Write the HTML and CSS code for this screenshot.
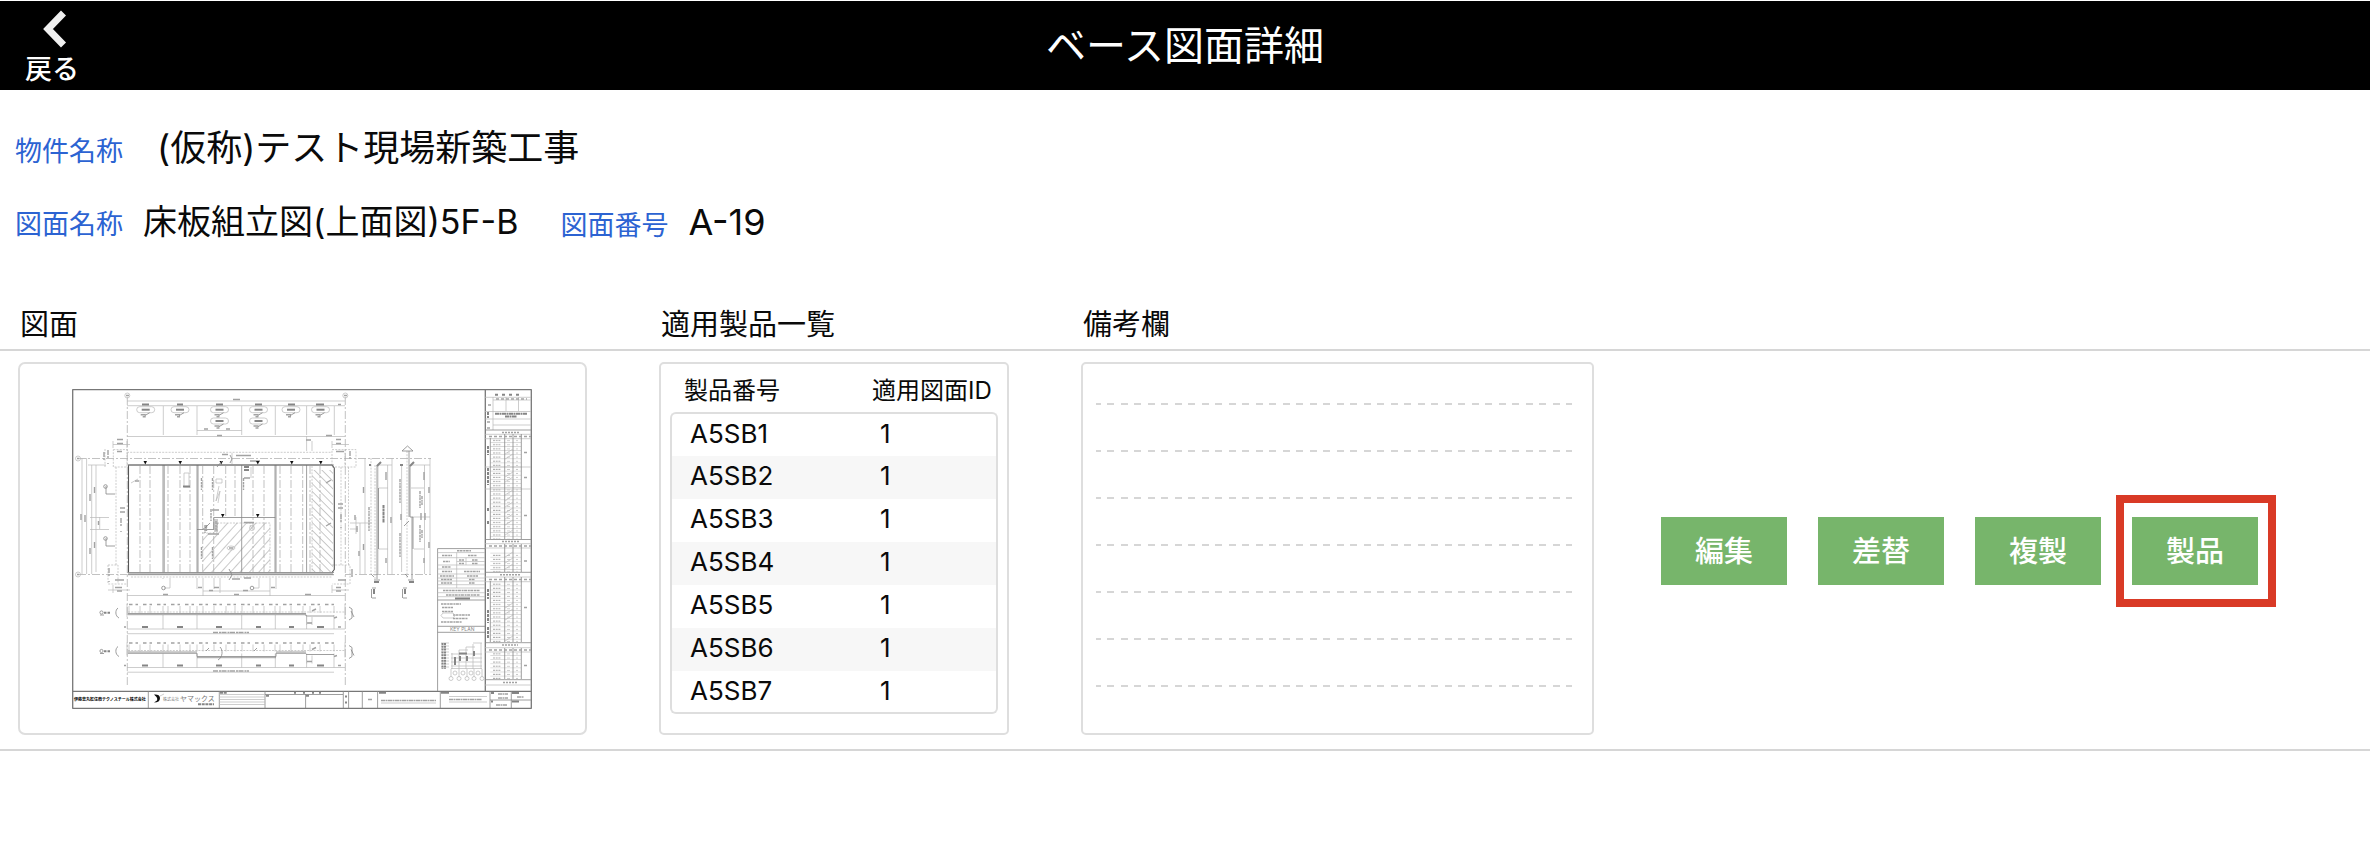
FILE: index.html
```html
<!DOCTYPE html>
<html lang="ja">
<head>
<meta charset="utf-8">
<meta name="viewport" content="width=device-width, initial-scale=1">
<title>ベース図面詳細</title>
<link rel="stylesheet" href="styles.css">
</head>
<body>
<header class="topbar">
  <button class="back" type="button">
    <svg class="back-icon" viewBox="0 0 24 38" aria-hidden="true"><path d="M20.500 3 L5 19 L20.500 35" /></svg>
    <span>戻る</span>
  </button>
  <h1 class="title">ベース図面詳細</h1>
</header>

<main>
  <dl class="info">
    <div class="info-row">
      <div class="pair pair-wide"><dt>物件名称</dt><dd>(仮称)テスト現場新築工事</dd></div>
    </div>
    <div class="info-row">
      <div class="pair"><dt>図面名称</dt><dd class="name">床板組立図(上面図)5F-B</dd></div>
      <div class="pair"><dt>図面番号</dt><dd>A-19</dd></div>
    </div>
  </dl>

  <div class="columns headings">
    <h2>図面</h2>
    <h2>適用製品一覧</h2>
    <h2><label for="notes">備考欄</label></h2>
  </div>

  <section class="columns record">
    <div class="cell">
      <div class="card drawing-card">
        <svg class="drawing" viewBox="62 377 481 341" role="img" aria-label="床板組立図">
          <defs>
            <pattern id="hatchA" width="7" height="7" patternUnits="userSpaceOnUse" patternTransform="rotate(42)"><path d="M0 0V7" stroke="#888" stroke-width=".9"/></pattern>
            <pattern id="hatchB" width="5.500" height="5.500" patternUnits="userSpaceOnUse" patternTransform="rotate(-45)"><path d="M0 0V6" stroke="#888" stroke-width=".9"/></pattern>
            <pattern id="rows" x="485" y="437.700" width="36" height="4.100" patternUnits="userSpaceOnUse"><path d="M5.300 4H36" stroke="#8c8c8c" stroke-width=".5"/><path d="M8 2H16" stroke="#aaa" stroke-width="1" stroke-dasharray="2 .7"/><path d="M22 2H25M31 2H33" stroke="#bbb" stroke-width=".8"/></pattern>
            <g id="tag"><rect x="-9" y="-3" width="18" height="6" rx="3" class="l"/><path d="M-4 0H4" class="mark"/><path d="M-5 5H0M-3 7H0" class="mark s"/><path d="M-1 6L4 3" class="d"/></g>
            <g id="section">
              <path class="l" d="M127 603V616M345 603V618M127 628H345M127 632.700H334"/>
              <path class="mark s" stroke-dasharray="3.500 3 2.500 5" d="M129 603.500H334"/>
              <path class="l dash" d="M128 611H345"/>
              <path class="l" d="M129 605V612M140 605V612M150 605V612M163 605V612M168 605V612M180 605V612M190 605V612M197 605V612M203 605V612M214 605V612M226 605V612M235 605V612M242 605V612M253 605V612M264 605V612M275 605V612M280 605V612M291 605V612M303 605V612M310 605V612M320 605V612M334 605V612"/>
              <path class="l" d="M163 614V628M197 614V628M241.700 614V628M275.300 614V628M306.600 614V628M334 614V628"/>
              <path class="mark" d="M142 626H148M177 626H183M216 626H222M256 626H261M289 626H294M317 626H324"/>
              <path class="mark s" d="M213 631.500H249" stroke-dasharray="5 1 2 .5"/>
              <circle class="d" cx="101.500" cy="611.500" r="1.600"/>
              <path class="mark" d="M104 611.800H110" stroke-dasharray="2.500 1"/>
              <path class="d" d="M118 607C115 609 115 615 119 617M349 606L352 608V617L349 619M100 614H104M351 610L354 616"/>
              <path class="l" d="M308 622H312M306.600 616V624M312 616V624"/>
              <path class="mark s" d="M307 622H312M334 617L337 616M312 610L316 608M338 626H341M124 626H126"/>
            </g>
          </defs>

          <!-- sheet frame -->
          <path class="frame" d="M72.700 388.700H531.300V707.300H72.700ZM72.700 690.300H531.300M485.300 388.700V690.300"/>

          <!-- grid lines and upper dimensions -->
          <path class="l axis" d="M127.300 396V684M345.300 396V684M78 457.500H431M78 573.500H127M345 573.500H431"/>
          <g class="l"><circle cx="127.300" cy="394.500" r="2.500"/><circle cx="345.300" cy="394.500" r="2.500"/><circle cx="78" cy="457.500" r="2.500"/><circle cx="78" cy="573.500" r="2.500"/></g>
          <path class="mark s" d="M126 394.500H129M344 394.500H347M77 457.500H79M77 573.500H79"/>
          <path class="l" d="M127 400H345M127 404.700H345M163.300 405V434M197 405V434M241.700 405V434M275.300 405V434M306.600 405V434M334.300 405V434M127 435.500H345M197 429.500H241.700"/>
          <path class="mark" d="M142 403.500H149M177 403.500H183M216 403.500H223M255 403.500H262M288 403.500H295M316 403.500H324"/>
          <path class="mark s" d="M233 398.500H240M217 434.500H222M326 434.500H332M204 428H208M226 428H230M338 403.500H341"/>
          <use href="#tag" x="145.700" y="408.700"/><use href="#tag" x="180" y="408.700"/><use href="#tag" x="219.500" y="408.700"/><use href="#tag" x="258.500" y="408.700"/><use href="#tag" x="291" y="408.700"/><use href="#tag" x="320.500" y="408.700"/><use href="#tag" x="219.500" y="420"/><use href="#tag" x="258.500" y="420"/>

          <!-- column corners -->
          <path class="l dash" d="M113.300 448.600H127V466H113.300ZM332 448.600H345V466H332ZM108 564V583H127M108 564H118V583M332 564H350V583H332M116 466V564M127 451.300H332M131 576H332M345 448.600H356V466H345M341 466V564M348.500 466V564M105 448V466"/>
          <path class="l" d="M113 440V447M127 440V447M113 443.500H130M332 440V447M332 443.500H349M306.600 435V450M312 440V450M108 589H130M332 589H349M113 584V592M332 584V592"/>
          <path class="mark s" d="M117 438.500H123M117 442.500H123M336 438.500H341M336 442.500H341M306 439H311M117 450.500H122M336 450.500H344M115 579H124M338 579H346M115 586.500H122M336 586.500H341M117 590H122M336 590H341M120 507H125M120 511H125M338 503H343M338 507H343M222 453.500H228M236 454.500H251M250 460H260M232 578H240M244 577H251"/>
          <path class="mark s" stroke-dasharray="5 1 2" d="M121 517V531M341 513V528M104 451V463M108 449V463M350 450V463M352 568V581M109 567V581"/>

          <!-- slab panels -->
          <path fill="url(#hatchB)" d="M312 469H333V571H312Z"/>
          <path fill="url(#hatchA)" d="M217 522H270V571H203V532H217Z"/>
          <path class="l dash" d="M217 522H270V571M203 532H217V522M312 465V571"/>
          <path class="l axis" d="M140 465V571M150 465V571M168 465V571M180 465V571M190 465V571M202.700 465V571M213.700 465V571M225.700 465V516M235 465V516M253 465V571M264 465V571M280 465V571M291 465V571M302.700 465V571M310 465V571M320 465V571"/>
          <path class="d" d="M163 464V571.500M164.200 464V571.500M197 464V571.500M198 464V571.500M241.700 464V571.500M275 464V571.500M276 464V571.500M306.600 464V571.500M275.300 516.500H213.700V528.500H197M215 518V531M217 518V531"/>
          <path class="thick" d="M128.500 571.500V464H332L334.300 467V568.500L332 571.500"/>
          <path class="d" d="M128 464H334M127.500 571.500H334M127.500 573.700H334"/>
          <path fill="#888" opacity=".55" d="M128 571.500H333V574H128Z"/>
          <path fill="#111" d="M143.500 460H147L145.300 463.500ZM178.500 460H182L180.200 463.500ZM219.500 460H223L221.200 463.500ZM256 460H259.500L257.800 463.500ZM290 460H293.500L291.800 463.500ZM319 460H322.500L320.800 463.500ZM221 513H224.500L222.700 516.500ZM256 513H259.500L257.700 516.500Z"/>
          <path class="l" d="M184 472H189V486H184ZM216 478H222V482H216ZM219 485L216 500L220 490L218 502M251 466V477M232 452V463M131 482L138 478M250 524L252 528M246 522H253"/>
          <circle class="l" cx="252" cy="527" r="2.500"/><ellipse class="l" cx="231" cy="547" rx="4" ry="2"/><path class="mark s" d="M229 547H233M135 480H139M326 482L331 479M326 525L331 522M244 521.500H254M212 509H219M244 477H250M208 533H219M203 528H207"/>
          <path class="mark" d="M183 485.500H190M244 466H249M244 469H249"/>
          <path class="mark s" stroke-dasharray="3 1 2 .5" d="M201.500 477V489M212.500 477V489M243.500 477V489M201.500 546V558M212.500 546V558M211 508V520M216 520V530M205 524V532M206.500 524V530"/>
          <path class="d" d="M229 568L232 574L229 579M230 454L232 458L230 462M205 527L210 522M217 466L222 460"/>

          <!-- left and right height dimensions -->
          <path class="l" d="M82 457V573M86.600 457V573M91.700 464V573M96 464V571M99.700 516V528M90 516.500H109M90 528.500H109M88 464H106M365 457V573M360 522V573M356 516V533M350 522H372M350 528H358"/>
          <path class="d" d="M106 485V493H115M106 537V545H115"/><circle class="d" cx="105.500" cy="485.500" r="1.800"/><circle class="d" cx="105.500" cy="537.500" r="1.800"/>
          <path class="mark s" d="M81 513V519M85 514V521M90 493V500M94.500 486V492M94.500 541V547M90 547V553M98.500 520V524M363.500 486V492M355 514V519M357 525V531M359 550V555M363.500 543V549"/>

          <!-- vertical sections -->
          <path class="l" d="M378 464V573M379 464H392M379 487H388M379 548H388M387.600 464V573M392 457V573M401.600 464V571M413 516H430M411 464H430M411 487H424M414 548H424M424.500 464V573M430 457V573"/>
          <path class="l dash" d="M375 464V578M407 450V578M371 457V573"/>
          <path class="d" d="M377 464V578M378.500 487V548M409 450V516M410 464V516H413V548M412 516V578"/>
          <path class="d" d="M402 450H413L407.500 445ZM374 579H380M408 579H414M371 573L374 576M405 573L408 576M409 520L404 525"/>
          <path class="mark s" stroke-dasharray="3 .7 2 .5" d="M369 506V530M400 478V502M400 532V556M420 490V507M422 495V504M420 524V541M422 529V537"/>
          <path class="mark" stroke-dasharray="3 .5" d="M383.500 504V522"/>
          <path class="mark s" d="M386 471V479M391 516V522M386 557V562M424 471V479M429 486V492M424 557V562M429 541V547M401 513V519M421 512V519M425 512V519"/>
          <path class="mark" d="M374 581H379M409 581H414M377 465L381 461M410 465L414 461M369 464H371M400 464H403"/>
          <path class="mark" d="M374 588V593M405 588V593"/><path class="d" d="M372 587H376M372 597H376M403 587H407M403 597H407M371.500 588V597M402.500 588V597"/>

          <!-- dimensions under the slab -->
          <path class="l" d="M127 594.500H345M203 590H270M163 577V578M170 577V587H164M259 577V587H253M197 577V588M203 577V595M214 577V588M220 577V592M270 577V595M276 577V588"/>
          <circle class="d" cx="163.500" cy="587" r="1.800"/><circle class="d" cx="252" cy="587" r="1.800"/>
          <path class="mark s" d="M163 593.500H168M234 593.500H239M305 593.500H311M209 589.500H213M243 589.500H248M198 586.500H202M214 586.500H219M271 586.500H275"/>

          <!-- horizontal sections -->
          <use href="#section"/>
          <path class="d" d="M128 612.500H306M128 613.700H306M306 613.700V615H334"/>
          <use href="#section" y="38.500"/>
          <path class="d" d="M128 651H197M128 652.300H197V655.500H276V652.300H306M276 651H306M306 653.500H334M197 656.700H276M206 650L209 647M254 650L257 647M220 646C223 649 223 656 218 659"/>

          <!-- general notes table -->
          <path class="d" d="M437.600 690V547.600H485M437.600 599H485M437.600 625.300H485M437.600 631.300H485"/>
          <path class="l" d="M437.600 551.600H485M437.600 556.700H485M437.600 564H485M437.600 568H485M437.600 573H485M437.600 577H485M437.600 580H485M437.600 583.700H485M437.600 587H485M437.600 591.700H485M437.600 595.700H485M456.700 551.600V587M466 556.700V564M456.700 560.500H485"/>
          <path class="mark s" stroke-dasharray="2 .5 3 .7" d="M457 549.800H471M442 554.500H452M468 554.500H477M443 560.500H450M459 559H464M472 559H478M459 562.500H464M472 562.500H478M442 566H451M442 570.500H452M464 570.500H480M440 575H454M467 575H478M441 578.500H452M469 578.500H475M441 582H452M469 582H475M443 589.500H480M446 594H480M441 603H461M442 606.500H453M442 610.500H453M453 614H470M453 617.500H468M441 621H462"/>
          <path class="mark" d="M455 597.500H470"/>
          <path class="l" d="M443 612H453L455 614.500L453 617H443L441 614.500Z"/>
          <text class="keyplan" x="450" y="630">KEY PLAN</text>
          <path class="l" d="M451 653H482M451 657H482M451 661H482M451 665H482M451 667.500H482M452 652V668M459 649V668M466 646V668M473 643V668M481 642V668M473 642H482M466 646H475M459 649H468"/>
          <path class="mark" d="M459 652.500H467M455 656V664M460 655V660M467 655V660M474 650V655"/>
          <path class="l" d="M441 642H449M441 645H449M441 648H449M441 651H449M441 654H449M441 657H449M441 660H449M441 663H449M441 666H449M451 668V676M459 668V676M467 668V676M474 668V676M482 668V676"/>
          <path class="mark" stroke-dasharray="2 .8" d="M442.500 642V668M445 642V668"/>
          <g class="l"><circle cx="451" cy="677.500" r="2"/><circle cx="459" cy="677.500" r="2"/><circle cx="467" cy="677.500" r="2"/><circle cx="474" cy="677.500" r="2"/><circle cx="482" cy="677.500" r="2"/><circle cx="455" cy="672" r="2"/><circle cx="463" cy="672" r="2"/><circle cx="471" cy="672" r="2"/><circle cx="478" cy="672" r="2"/></g>

          <!-- parts list -->
          <path fill="url(#rows)" d="M485 437.700H521.300V538H485ZM485 551H521.300V571H485ZM485 581H521.300V641H485ZM485 651H521.300V678H485Z"/>
          <path class="l" d="M485 396.300H531M493 399H531M485 410.500H531M485 418H531M493 424H531M485 433.300H531M485 437.700H531M485 466H531M485 488H531M485 542.700H531M485 547H531M485 576H531M485 580.700H531M485 646.700H531M485 651H531M485 684H531M493 396V429M506 396V410M518.500 396V410"/>
          <path class="d" d="M485 429H531M485 538.500H531M485 571.300H531M485 641.700H531M485 678.700H531"/>
          <path class="d" d="M490.300 437V538M504.700 433V538M513 433V538M521.300 433V538M504.700 543V571M513 543V571M521.300 543V571M490.300 580V641M504.700 576V641M513 576V641M521.300 576V641M504.700 647V678M513 647V678M521.300 647V678"/>
          <path class="l" d="M505 453L513 448M505 458L513 453M505 476L513 471M505 481L513 476M505 494L513 489M505 500L513 494M505 506L513 501M505 512L513 507M505 518L513 513M505 524L513 519M505 534L513 529M505 556L513 551M505 562L513 557M505 568L513 563M505 607L513 602M505 613L513 608M505 619L513 614M505 640L513 635"/>
          <path class="mark" stroke-dasharray="3 4" d="M495 393.700H522"/>
          <path class="mark" stroke-dasharray="4 .5 2 .5" d="M495 412.800H527M505 415.500H517"/>
          <path class="mark s" stroke-dasharray="2 1" d="M502 431.500H519M502 540.500H519M500 573.800H520M502 644H518M503 681.500H518"/>
          <path class="mark s" stroke-dasharray="3 2" d="M488 404H492M489 435.500H531M489 545H531M489 578.500H531M489 649H531M524 451.500H528M524 476.500H528M524 514.500H528M524 560H528M524 606.500H528M524 664.500H528M496 398H527M487 421H492M487 427H492"/>
          <path class="mark" stroke-dasharray="3 1" d="M488 411V417M488 445V454M488 467V484M488 507V511M488 520V524M488 588V598M488 609V622M488 626V638"/>

          <!-- title block -->
          <path class="d" d="M148.300 690V707M219.300 690V707M265 690V707M305.600 693V707M343.300 690V707M348.600 690V707M362.300 690V707M377.600 690V707M440.300 690V707M490 690V707M511.300 690V707M265 693.500H343M490 699H531"/>
          <path class="l" d="M219 693.500H265M219 696H265M219 698.500H265M219 701H265M219 703.500H265M381 702H436M449 695.500H487M449 701H487"/>
          <text class="maker" x="74" y="700">伊藤忠丸紅住商テクノスチール株式会社</text>
          <path fill="#111" d="M154 693.500C157 693 160 694 160 697C160 700 158 701.500 154 701.500L157 699.500C158 697 156 695.500 154 693.500Z"/><path class="l" d="M160 695L164 693"/>
          <text class="small-name" x="163" y="700">株式会社</text>
          <text class="brand" x="180" y="700">ヤマックス</text>
          <path class="mark" stroke-dasharray="3 .7" d="M198 703.300H214M220 691.800H227"/>
          <path class="mark" d="M294 691.800H296M303 691.800H305M312 691.800H314M319 691.800H321M266 694.800H269M306 694.800H309M345 695.500H347M345 701.500H347M379 691.800H386M441 691.800H449M491 692H494M491 700.500H493M512 692H519M512 700.500H519"/>
          <path class="mark s" stroke-dasharray="4 .5 2 .5" d="M381 699.500H436M449 698.500H482M368 698.500H372M498 693H508M498 697H508M496 704H507M517 696H524"/>
        </svg>
      </div>
    </div>

    <div class="cell">
      <div class="card products">
        <table class="product-table">
          <thead><tr><th scope="col">製品番号</th><th scope="col">適用図面ID</th></tr></thead>
          <tbody>
            <tr><td>A5SB1</td><td>1</td></tr>
            <tr><td>A5SB2</td><td>1</td></tr>
            <tr><td>A5SB3</td><td>1</td></tr>
            <tr><td>A5SB4</td><td>1</td></tr>
            <tr><td>A5SB5</td><td>1</td></tr>
            <tr><td>A5SB6</td><td>1</td></tr>
            <tr><td>A5SB7</td><td>1</td></tr>
          </tbody>
        </table>
      </div>
    </div>

    <div class="cell cell-notes">
      <div class="card notes-card"><textarea id="notes" class="notes" readonly></textarea></div>
    </div>

    <div class="actions">
      <button type="button">編集</button>
      <button type="button">差替</button>
      <button type="button">複製</button>
      <button type="button" class="highlighted">製品</button>
    </div>
  </section>
</main>
</body>
</html>
```
FILE: styles.css
```css
* { box-sizing: border-box; }

body {
  margin: 0;
  background: #fff;
  color: #0a0a0a;
  font-family: Inter, "Noto Sans CJK JP", sans-serif;
}

button {
  font: inherit;
  border: 0;
  padding: 0;
  cursor: pointer;
}

/* top bar */
.topbar {
  display: grid;
  grid-template-columns: 1fr auto 1fr;
  align-items: center;
  margin-top: 1px;
  height: 89px;
  padding: 0 25px;
  background: #000;
  color: #fff;
}

.back {
  justify-self: start;
  display: flex;
  flex-direction: column;
  align-items: center;
  gap: 4px;
  padding-top: 6px;
  background: none;
  color: #fff;
  font-size: 27px;
  font-weight: 500;
  line-height: 36px;
}

.back-icon {
  width: 24px;
  height: 38px;
  margin-left: 6px;
  fill: none;
  stroke: #f0f0f0;
  stroke-width: 7;
}

.title {
  margin: 0;
  font-size: 40px;
  font-weight: 400;
  line-height: 56px;
}

/* property and drawing names */
.info {
  margin: 0;
  padding: 32px 15px 0;
}

.info-row {
  display: flex;
  gap: 42px;
  height: 74px;
}

.pair {
  display: flex;
  align-items: baseline;
  gap: 20px;
}

.pair-wide { gap: 34px; }

.pair dt {
  color: #2c63d2;
  font-size: 27px;
  line-height: 52px;
}

.pair dd {
  margin: 0;
  font-size: 36px;
  line-height: 52px;
}

.pair .name { font-size: 34px; }

/* record list */
.columns {
  display: grid;
  grid-template-columns: 641fr 422fr 580fr 691px;
  padding: 0 18px;
  border-bottom: 2px solid #d6d6d6;
}

.headings { padding-top: 33px; }

.headings h2 {
  margin: 0;
  padding: 0 2px 2px;
  font-size: 29px;
  font-weight: 400;
  line-height: 44px;
}

.record {
  padding-top: 11px;
  padding-bottom: 14px;
}

.cell {
  display: flex;
  padding-right: 72px;
}

.cell-notes { padding-right: 67px; }

.card {
  flex: 1;
  min-width: 0;
  border: 2px solid #dedede;
  border-radius: 5px;
}

.drawing-card {
  display: flex;
  align-items: center;
  justify-content: center;
  padding: 14px 24px;
  border-radius: 7px;
}

/* applied products */
.products { padding: 8px 9px 19px; }

.product-table {
  width: 100%;
  border-collapse: separate;
  border-spacing: 0;
  table-layout: fixed;
  font-size: 26px;
  line-height: 38px;
}

.product-table th {
  padding: 0 0 2px 14px;
  font-size: 24px;
  font-weight: 400;
  text-align: left;
  white-space: nowrap;
}

.product-table th:first-child { width: 202px; }
.product-table th:last-child { padding-left: 0; }

.product-table td {
  padding: 1px 0 4px;
  border: 0 solid #dedede;
}

.product-table td:first-child {
  padding-left: 18px;
  border-left-width: 2px;
}

.product-table td:last-child {
  padding-left: 8px;
  border-right-width: 2px;
}

.product-table tbody tr:nth-child(even) td { background: #f7f7f7; }
.product-table tbody tr:first-child td { border-top-width: 2px; padding-bottom: 3px; }
.product-table tbody tr:last-child td { border-bottom-width: 2px; padding-bottom: 2px; }
.product-table tbody tr:first-child td:first-child { border-top-left-radius: 6px; }
.product-table tbody tr:first-child td:last-child { border-top-right-radius: 6px; }
.product-table tbody tr:last-child td:first-child { border-bottom-left-radius: 6px; }
.product-table tbody tr:last-child td:last-child { border-bottom-right-radius: 6px; }

/* ruled notes field */
.notes-card {
  display: flex;
  padding: 0 20px 36px 13px;
}

.notes {
  flex: 1;
  min-width: 0;
  padding: 0;
  border: 0;
  resize: none;
  font-family: inherit;
  font-size: 26px;
  line-height: 47px;
  background-color: #fff;
  background-image:
    repeating-linear-gradient(to bottom, #fff 0 39px, transparent 39px 41px, #fff 41px 47px),
    repeating-linear-gradient(to right, #d6d6d6 0 7px, #fff 7px 13px, #d6d6d6 13px 20px, #fff 20px 27px);
  background-position: 0 0, -2px 0;
}

/* record actions */
.actions {
  display: flex;
  align-items: center;
  gap: 31px;
  padding-top: 4px;
}

.actions button {
  position: relative;
  width: 126px;
  height: 68px;
  padding-bottom: 4px;
  background: #77b56b;
  color: #fff;
  font-size: 29px;
  font-weight: 500;
}

.highlighted::after {
  content: "";
  position: absolute;
  inset: -22px -18px -22px -16px;
  border: 8px solid #d93a26;
}

/* drawing thumbnail */
.drawing {
  width: 100%;
  max-width: 481px;
  height: auto;
}

.drawing path { stroke-linejoin: round; }
.drawing .frame { fill: none; stroke: #777; stroke-width: 1.3; }
.drawing .l { fill: none; stroke: #b8b8b8; stroke-width: .7; }
.drawing .d { fill: none; stroke: #858585; stroke-width: .8; }
.drawing .thick { fill: none; stroke: #555; stroke-width: 1.1; }
.drawing .dash { stroke-dasharray: 2 1.2; }
.drawing .axis { stroke: #a8a8a8; stroke-dasharray: 8 2 2 2; }
.drawing .mark { fill: none; stroke: #858585; stroke-width: 2; }
.drawing .s { stroke: #a2a2a2; stroke-width: 1.4; }
.drawing .maker { font-size: 4px; font-weight: 700; }
.drawing .small-name { font-size: 4px; fill: #777; }
.drawing .brand { font-size: 7px; fill: #777; }
.drawing .keyplan { font-size: 5px; fill: #888; }
```
